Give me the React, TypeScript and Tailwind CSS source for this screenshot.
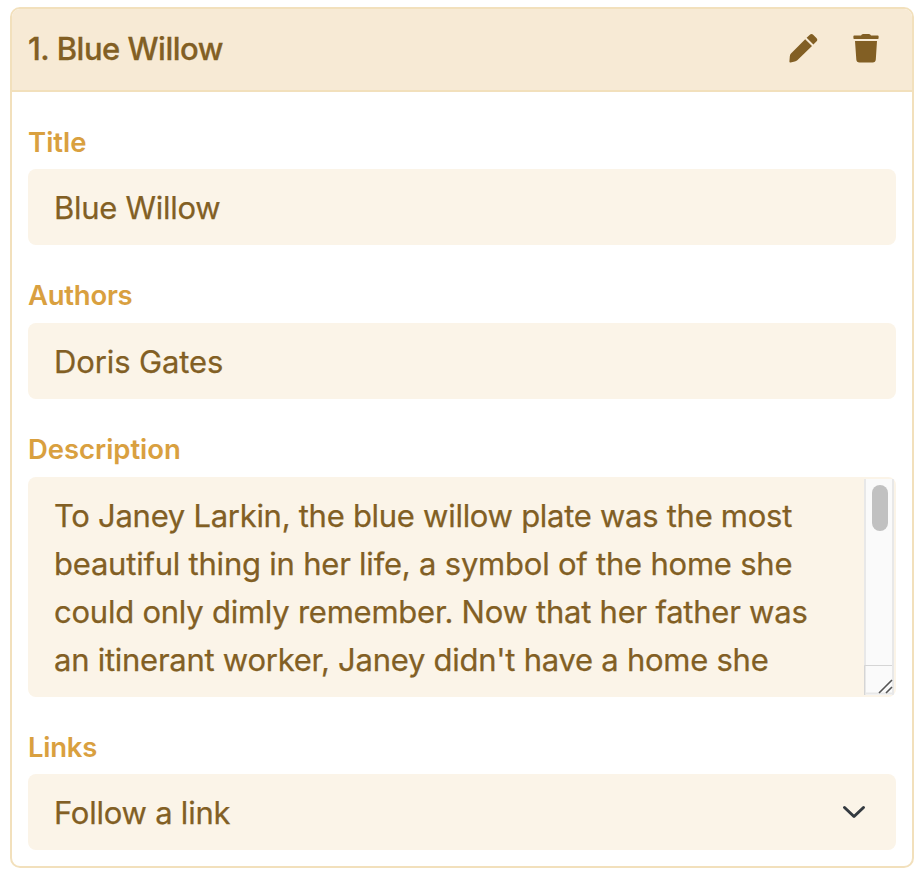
import type { ReactNode } from "react";

function PencilIcon() {
  return (
    <svg width="30" height="30" viewBox="0 0 30 30" fill="currentColor" aria-hidden="true">
      <path d="M17.2 6.2 24 13 9.3 27.2Q8.2 28.2 6.8 28.6L2.6 29.4Q1.3 29.6 1.4 28.4L1.8 23.4Q1.9 21.6 3 20.5Z" />
      <path d="M18.6 4.8 21.6 2Q23.5.2 25.4 2L28.4 4.9Q30.2 6.7 28.4 8.6L25.4 11.5Z" />
    </svg>
  );
}

function TrashIcon() {
  return (
    <svg width="26" height="30" viewBox="0 0 26 30" fill="currentColor" aria-hidden="true">
      <path d="M1.2 2.5H8Q8.6 1 10 1H16Q17.4 1 18 2.5H24.8Q25.6 2.5 25.6 3.3V5.2Q25.6 6 24.8 6H1.2Q.4 6 .4 5.2V3.3Q.4 2.5 1.2 2.5Z" />
      <path d="M2 7.9H24L22.8 26.4Q22.6 29.4 19.6 29.4H6.5Q3.5 29.4 3.3 26.4Z" />
    </svg>
  );
}

function Label({ children, className }: { children: ReactNode; className: string }) {
  return <div className={`h-[42px] text-[27.5px] font-semibold text-[#d9a03f] ${className}`}>{children}</div>;
}

const lines = [
  { text: "To Janey Larkin, the blue willow plate was the most", style: "tracking-[-0.28px]" },
  { text: "beautiful thing in her life, a symbol of the home she", style: "tracking-[-0.22px]" },
  { text: "could only dimly remember. Now that her father was", style: "tracking-[-0.24px]" },
  { text: "an itinerant worker, Janey didn't have a home she", style: "tracking-[-0.26px]" },
];

export default function App() {
  return (
    <main className="h-[876px] w-[922px] bg-white pt-[7px] pl-[10px] font-['Inter',sans-serif] text-[#825f24]">
      <section className="h-[861px] w-[904px] overflow-hidden rounded-[10px] border-2 border-[#f2e0bc]">
        <header className="flex h-[83px] items-center border-b-2 border-[#f2e0bc] bg-[#f7ead5] pr-[33px] pb-[2px] pl-4">
          <h1 className="flex-1 text-[31px] leading-[48px] font-medium tracking-[-0.5px] [-webkit-text-stroke:0.3px]">1. Blue Willow</h1>
          <button className="mr-[35px] mb-[2px]" aria-label="Edit"><PencilIcon /></button>
          <button className="mb-[2px]" aria-label="Delete"><TrashIcon /></button>
        </header>
        <div className="px-4 pt-[29px]">
          <Label className="leading-[42px] tracking-[0px]">Title</Label>
          <div className="mt-[6px] h-[76px] rounded-lg bg-[#fbf4e8] px-[26px] text-[31px] leading-[78px] tracking-[-0.27px] [-webkit-text-stroke:0.25px]">Blue Willow</div>
          <Label className="mt-[30px] leading-[40px] tracking-[-0.25px]">Authors</Label>
          <div className="mt-[6px] h-[76px] rounded-lg bg-[#fbf4e8] px-[26px] text-[31px] leading-[78px] tracking-[-0.12px] [-webkit-text-stroke:0.25px]">Doris Gates</div>
          <Label className="mt-[30px] leading-[40px] tracking-[-0.05px]">Description</Label>
          <div className="mt-[6px] flex h-[220px] justify-between overflow-hidden rounded-lg bg-[#fbf4e8] pr-[2px] pl-[26px]">
            <div className="pt-[15px] text-[31px] leading-[48px] whitespace-nowrap [-webkit-text-stroke:0.25px]">
              {lines.map((line) => <p key={line.text} className={line.style}>{line.text}</p>)}
            </div>
            <div className="my-[2px] flex w-[30px] shrink-0 flex-col border-x-2 border-[#e8e8e8] bg-[#fafafa]">
              <div className="mt-[6px] ml-[6px] h-[46px] w-4 shrink-0 rounded-full bg-[#c1c1c1]" />
              <svg className="mt-auto -ml-[2px] shrink-0" width="30" height="31" viewBox="0 0 30 31" fill="none" aria-hidden="true">
                <path d="M.5 31V1.5H28" stroke="#d5d5d5" />
                <path d="M2 29.5H28" stroke="#e8e8e8" strokeWidth="2" />
                <path d="M15 29 28 16M22 29l6-6" stroke="#555" strokeWidth="1.6" />
              </svg>
            </div>
          </div>
          <Label className="mt-[29px] leading-[42px] tracking-[-0.25px]">Links</Label>
          <div className="mt-[6px] flex h-[76px] items-center justify-between rounded-lg bg-[#fbf4e8] pr-[30px] pl-[26px]">
            <span className="pt-[2px] text-[31px] leading-[76px] tracking-[-0.23px] [-webkit-text-stroke:0.25px]">Follow a link</span>
            <svg width="24" height="14" viewBox="0 0 24 14" fill="none" stroke="#343a40" strokeWidth="3" strokeLinecap="round" strokeLinejoin="round" aria-hidden="true"><path d="m2.5 2.5 9.5 9 9.5-9" /></svg>
          </div>
        </div>
      </section>
    </main>
  );
}
